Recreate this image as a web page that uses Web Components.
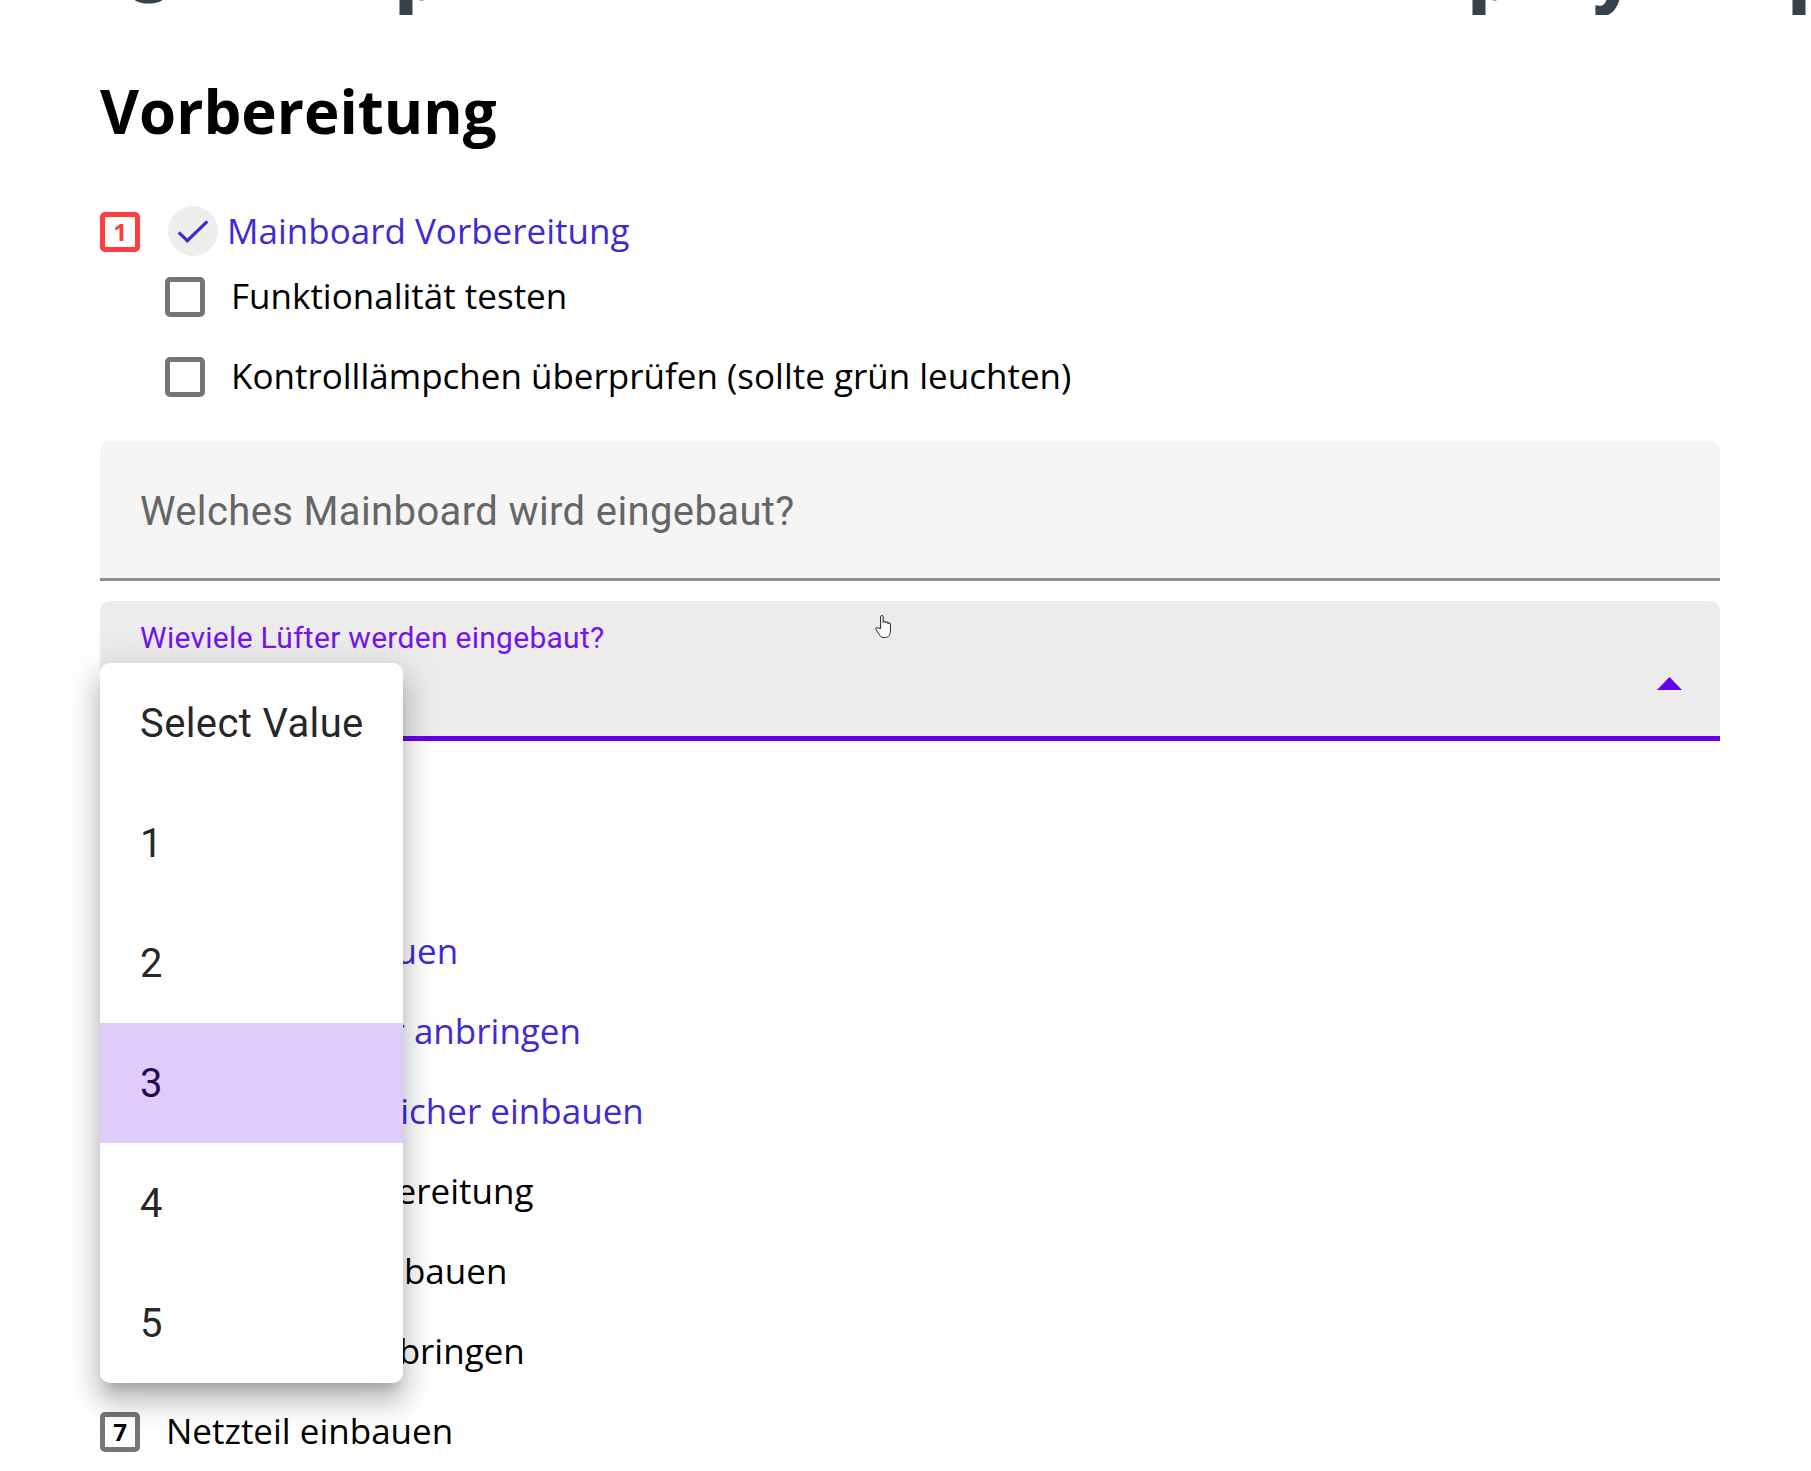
<!DOCTYPE html>
<html lang="de">
<head>
<meta charset="utf-8">
<title>Vorbereitung</title>
<style>
  html, body { margin: 0; padding: 0; background: #fff; height: 1471px; overflow: hidden; }
  body { font-family: "Open Sans", sans-serif; color: #000; }
  .sheet { display: flex; flex-direction: column; padding: 0 91px 0 100px; }
  .rest { margin-top: 171px; display: block; }
</style>
</head>
<body>
<div class="sheet">
  <clipped-title></clipped-title>
  <section-title>Vorbereitung</section-title>
  <step-row num="1" state="active" done style="--row-h: 50px">Mainboard Vorbereitung</step-row>
  <check-item style="margin-top: 1px">Funktionalität testen</check-item>
  <check-item>Kontrolllämpchen überprüfen (sollte grün leuchten)</check-item>
  <text-field style="margin-top: 24px">Welches Mainboard wird eingebaut?</text-field>
  <select-field style="margin-top: 20px" label="Wieviele Lüfter werden eingebaut?">
    <select-menu>
      <select-option>Select Value</select-option>
      <select-option>1</select-option>
      <select-option>2</select-option>
      <select-option selected>3</select-option>
      <select-option>4</select-option>
      <select-option>5</select-option>
    </select-menu>
  </select-field>
  <div class="rest">
    <step-row num="2" done>CPU einbauen</step-row>
    <step-row num="3" done>CPU-Lüfter anbringen</step-row>
    <step-row num="4" done>Arbeitsspeicher einbauen</step-row>
    <step-row num="5">Gehäuse Vorbereitung</step-row>
    <step-row num="6">Mainboard einbauen</step-row>
    <step-row num="7">Festplatten anbringen</step-row>
    <step-row num="8" shown="7">Netzteil einbauen</step-row>
  </div>
</div>
<hand-cursor></hand-cursor>

<script>
// small helper, every element just sets its own shadow html
class Base extends HTMLElement {
  connectedCallback() {
    if (this.shadowRoot) return;
    this.attachShadow({ mode: "open" }).innerHTML = this.html();
  }
}

// only the descenders of the page title are still on screen after scrolling
class ClippedTitle extends Base {
  html() {
    return `
      <style>
        :host { display: flex; height: 15px; overflow: hidden; margin-left: -100px; margin-right: -91px;
          font: 800 68px/68px "Open Sans", sans-serif; color: #37424f; }
        span { display: block; flex: none; margin-top: -60px; }
      </style>
      <span style="margin-left:122px;width:258px;margin-top:-57px">C</span>
      <span style="width:1073px;margin-left:15px">p</span>
      <span style="width:124px">p</span>
      <span style="width:196px">y</span>
      <span>p</span>`;
  }
}

class SectionTitle extends Base {
  html() {
    return `
      <style>
        :host { display: block; margin: 56px 0 55px; font: 700 60px/80px "Open Sans", sans-serif; color: #000; }
      </style>
      <slot></slot>`;
  }
}

class StepRow extends Base {
  html() {
    const num = this.getAttribute("shown") || this.getAttribute("num");
    const active = this.getAttribute("state") === "active";
    const done = this.hasAttribute("done");
    return `
      <style>
        :host { display: flex; align-items: center; height: var(--row-h, 80px);
          font: 400 35px/48px "Open Sans", sans-serif; color: #000; }
        .num { flex: none; box-sizing: border-box; width: 40px; height: 40px; border: 5.5px solid #757575;
          border-radius: 5px; display: flex; align-items: center; justify-content: center;
          font: 700 24px/1 "Open Sans", sans-serif; color: #000; }
        .num.active { border-color: #ff3b3f; color: #ff3b3f; margin-top: 2px; }
        .tick { flex: none; width: 50px; height: 50px; margin: 0 9px 0 28px; border-radius: 50%; background: #eee; }
        .tick svg { display: block; }
        .label { margin-left: 26px; padding-bottom: ${active ? 0 : 2}px; }
        :host([done]) { color: #3f2bd4; }
        :host([done]) .label { margin-left: 0; }
      </style>
      <span class="num ${active ? "active" : ""}">${num}</span>
      ${done ? `<span class="tick"><svg width="50" height="50" viewBox="0 0 50 50" fill="none"
        stroke="#3f2bd4" stroke-width="3.2"><path d="M10.7 26.3 19.3 34.7 39.3 15.3"/></svg></span>` : ""}
      <span class="label"><slot></slot></span>`;
  }
}

class CheckItem extends Base {
  html() {
    return `
      <style>
        :host { display: flex; align-items: center; height: 80px; padding-left: 65px;
          font: 400 35px/48px "Open Sans", sans-serif; color: #000; }
        i { flex: none; box-sizing: border-box; width: 40px; height: 40px; margin-right: 26px;
          border: 5.5px solid #757575; border-radius: 5px; }
        span { padding-bottom: 2px; }
      </style>
      <i></i><span><slot></slot></span>`;
  }
}

class TextField extends Base {
  html() {
    return `
      <style>
        :host { display: flex; align-items: center; box-sizing: border-box; height: 140px; padding: 4px 40px 0;
          background: #f5f5f5; border-radius: 10px 10px 0 0; border-bottom: 3px solid #8f8f8f;
          font: 400 40px/48px Roboto, sans-serif; letter-spacing: .009375em; color: #666; }
      </style>
      <slot></slot>`;
  }
}

class SelectField extends Base {
  html() {
    return `
      <style>
        :host { display: block; position: relative; box-sizing: border-box; height: 140px;
          background: #ececec; border-radius: 10px 10px 0 0; border-bottom: 5px solid #6200ee; }
        .label { display: block; padding: 17px 40px 0; font: 400 30px/40px Roboto, sans-serif;
          letter-spacing: .009375em; color: #7414ee; }
        svg { position: absolute; right: 38px; top: 76px; display: block; }
      </style>
      <span class="label">${this.getAttribute("label")}</span>
      <svg width="25" height="13" viewBox="0 0 25 13"><path d="M0 13 12.5 0 25 13Z" fill="#6200ee"/></svg>
      <slot></slot>`;
  }
}

class SelectMenu extends Base {
  html() {
    return `
      <style>
        :host { display: block; position: absolute; z-index: 5; left: 0; top: 62px; width: 303px;
          box-sizing: border-box; background: #fff; border-radius: 10px;
          box-shadow: 0 12.5px 12.5px -7.5px rgba(0,0,0,.2), 0 20px 25px 2.5px rgba(0,0,0,.14), 0 7.5px 35px 6px rgba(0,0,0,.12); }
      </style>
      <slot></slot>`;
  }
}

class SelectOption extends Base {
  html() {
    return `
      <style>
        :host { display: flex; align-items: center; box-sizing: border-box; height: 120px; padding: 2px 40px 0; white-space: nowrap;
          font: 400 40px/48px Roboto, sans-serif; letter-spacing: .009375em; color: rgba(0,0,0,.87); }
        :host([selected]) { background: #dfccfb; color: #260a52; }
      </style>
      <slot></slot>`;
  }
}

// mouse pointer sitting on top of the open select
class HandCursor extends Base {
  html() {
    return `
      <style>
        :host { position: absolute; left: 875px; top: 615px; width: 20px; height: 24px; z-index: 9; }
        svg { display: block; }
      </style>
      <svg width="20" height="24" viewBox="0 0 20 24" fill="#fff" stroke="#222" stroke-width="1">
        <path d="M5.6 13.5V1.8a1.3 1.3 0 0 1 2.6 0V7.5a1.2 1.2 0 0 1 2.4 0V8a1.2 1.2 0 0 1 2.4 0V9a1.2 1.2 0 0 1 2.4 0V16c0 4-2 6.5-5 6.5H8.4c-2 0-3-1-4-3L1 14.5c-.8-1.4.6-2.5 1.8-1.5Z"/>
      </svg>`;
  }
}

customElements.define("clipped-title", ClippedTitle);
customElements.define("section-title", SectionTitle);
customElements.define("step-row", StepRow);
customElements.define("check-item", CheckItem);
customElements.define("text-field", TextField);
customElements.define("select-field", SelectField);
customElements.define("select-menu", SelectMenu);
customElements.define("select-option", SelectOption);
customElements.define("hand-cursor", HandCursor);
</script>
</body>
</html>
